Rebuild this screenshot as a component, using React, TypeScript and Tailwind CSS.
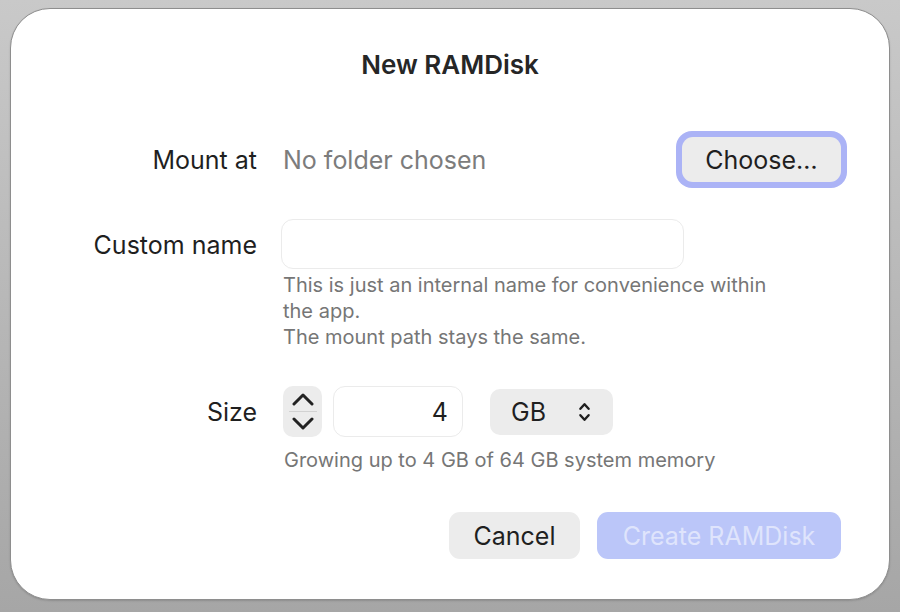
import { useState } from "react";

const font = { fontFamily: "Inter, 'Noto Sans', sans-serif" };

const ChevronUp = ({ className }: { className?: string }) => (
    <svg viewBox="0 0 24 14" className={className} fill="none" stroke="currentColor" strokeWidth={3} strokeLinecap="round" strokeLinejoin="round">
        <path d="M3 12 L12 3 L21 12" />
    </svg>
);

const ChevronDown = ({ className }: { className?: string }) => (
    <svg viewBox="0 0 24 14" className={className} fill="none" stroke="currentColor" strokeWidth={3} strokeLinecap="round" strokeLinejoin="round">
        <path d="M3 2 L12 11 L21 2" />
    </svg>
);

const UpDown = () => (
    <svg viewBox="0 0 14 24" className="h-[22px] w-[13px]" fill="none" stroke="currentColor" strokeWidth={2.6} strokeLinecap="round" strokeLinejoin="round">
        <path d="M2.5 8.5 L7 3.5 L11.5 8.5" />
        <path d="M2.5 15.5 L7 20.5 L11.5 15.5" />
    </svg>
);

export default function App() {
    // Size value and custom name kept local to the sheet.
    const [size, setSize] = useState(4);
    const [name, setName] = useState("");

    return (
        <div
            style={font}
            className="flex h-[612px] w-[900px] items-start bg-gradient-to-b from-[#c9c9c9] to-[#a6a6a6] pl-[10px] pt-[8px]"
        >
            <div className="flex h-[592px] w-[880px] flex-col rounded-[40px] border border-[#8e8e8e] bg-white text-[#1f1f1f] shadow-[0_1px_2px_rgba(0,0,0,0.15)]">
                <h1 className="pt-[40px] text-center text-[26px] font-semibold leading-[32px] text-[#262626]">
                    New RAMDisk
                </h1>

                {/* Mount at */}
                <div className="mt-[50px] flex h-[57px] items-center pr-[42px]">
                    <div className="w-[246px] pt-[3px] text-right text-[25px]">Mount at</div>
                    <div className="ml-[26px] flex-1 pt-[3px] text-[25px] text-[#7c7c7c]">No folder chosen</div>
                    <div className="rounded-[16px] bg-[#abb3f6] p-[6px]">
                        <button className="h-[45px] w-[159px] rounded-[11px] bg-[#ececec] pt-[3px] text-[25px] text-[#1f1f1f]">
                            Choose…
                        </button>
                    </div>
                </div>

                {/* Custom name */}
                <div className="mt-[31px] flex items-start">
                    <div className="flex h-[50px] w-[246px] items-center justify-end pt-[3px] text-[25px]">
                        Custom name
                    </div>
                    <div className="ml-[24px] flex flex-col">
                        <input
                            value={name}
                            onChange={(e) => setName(e.target.value)}
                            className="h-[50px] w-[403px] rounded-[12px] border border-[#ebebeb] px-3 text-[24px] outline-none"
                        />
                        <p className="mt-[3px] w-[505px] pl-[2px] text-[20px] leading-[26px] text-[#767676]">
                            This is just an internal name for convenience within the app.
                            <br />
                            The mount path stays the same.
                        </p>
                    </div>
                </div>

                {/* Size */}
                <div className="mt-[36px] flex items-start">
                    <div className="flex h-[51px] w-[246px] items-center justify-end pt-[3px] text-[25px]">Size</div>
                    <div className="ml-[26px] flex flex-col">
                        <div className="flex items-center">
                            <div className="flex h-[51px] w-[39px] flex-col items-center justify-center rounded-[10px] bg-[#ececec] text-[#222]">
                                <button onClick={() => setSize((s) => s + 1)} className="flex h-[24px] items-center">
                                    <ChevronUp className="h-[14px] w-[24px]" />
                                </button>
                                <div className="h-px w-[28px] bg-[#d2d2d2]" />
                                <button onClick={() => setSize((s) => Math.max(1, s - 1))} className="flex h-[24px] items-center">
                                    <ChevronDown className="h-[14px] w-[24px]" />
                                </button>
                            </div>
                            <div className="ml-[11px] flex h-[51px] w-[130px] items-center justify-end rounded-[12px] border border-[#ebebeb] pr-[14px] pt-[3px] text-[25px]">
                                {size}
                            </div>
                            <div className="ml-[27px] flex h-[46px] w-[123px] items-center justify-between rounded-[10px] bg-[#ececec] pl-[21px] pr-[22px] text-[25px]">
                                <span className="pt-[3px]">GB</span>
                                <UpDown />
                            </div>
                        </div>
                        <p className="mt-[10px] pl-px text-[20px] leading-[26px] text-[#767676]">
                            Growing up to {size} GB of 64 GB system memory
                        </p>
                    </div>
                </div>

                {/* Actions */}
                <div className="mt-[39px] flex justify-end gap-[17px] pr-[48px]">
                    <button className="h-[47px] w-[131px] rounded-[11px] bg-[#ececec] pt-[3px] text-[25px] text-[#1f1f1f]">
                        Cancel
                    </button>
                    <button disabled className="h-[47px] w-[244px] rounded-[11px] bg-[#bbc6f9] pt-[3px] text-[25px] text-[#dfe4fc]">
                        Create RAMDisk
                    </button>
                </div>
            </div>
        </div>
    );
}
